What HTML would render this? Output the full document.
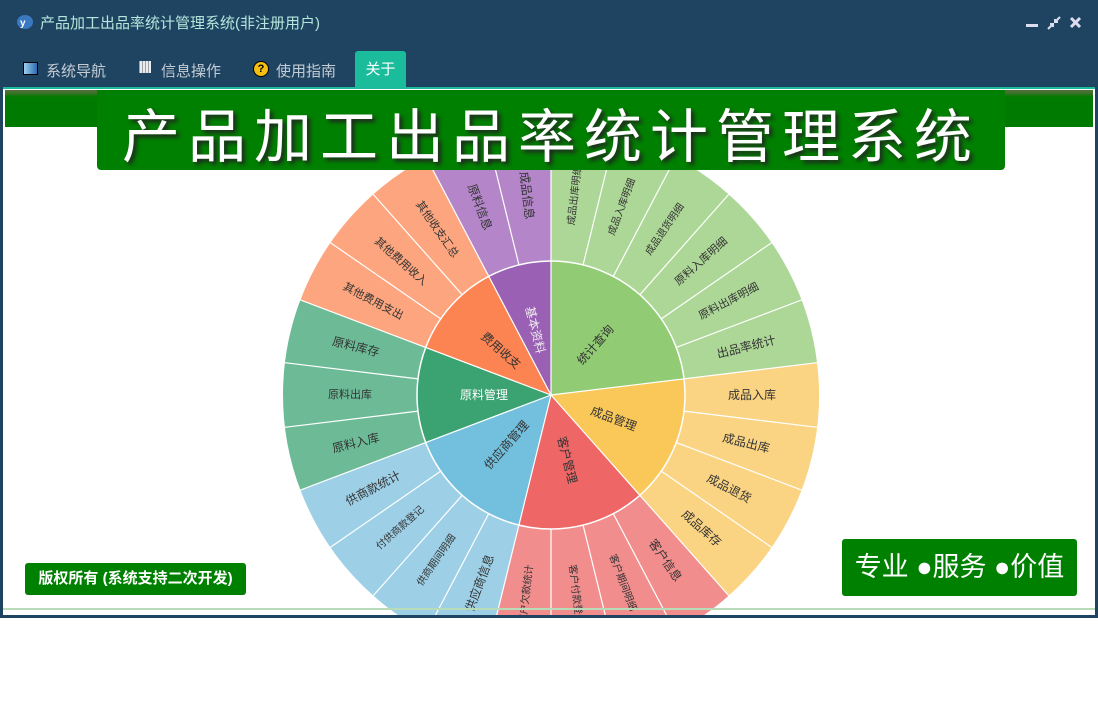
<!DOCTYPE html>
<html><head><meta charset="utf-8"><style>
body{margin:0;width:1098px;height:728px;background:#fff;font-family:"Liberation Sans","Noto Sans CJK SC",sans-serif;position:relative;overflow:hidden}
.win{position:absolute;left:0;top:0;width:1098px;height:618px;background:#1f4462;}
.title{position:absolute;left:40px;top:12px;color:#b6e6dc;font-size:15px}
.tab{position:absolute;top:60px;color:#c4ccd4;font-size:15px}
.content{position:absolute;left:3px;top:89px;width:1092px;height:526px;background:#fff;overflow:hidden}
.green{background:#008000;color:#fff;position:absolute}
</style></head><body>
<div class="win">
 <svg style="position:absolute;left:16px;top:14px" width="18" height="16"><ellipse cx="9" cy="8" rx="8" ry="7" fill="#3a78c0"/><text x="4" y="12" font-size="10" fill="#fff" font-weight="bold">y</text></svg>
 <div class="title">产品加工出品率统计管理系统(非注册用户)</div>
 <svg style="position:absolute;left:1024px;top:15px" width="62" height="16">
  <rect x="2" y="9" width="12" height="3" fill="#dde"/>
  <path d="M24 14 L29 9 M26 9 L29 9 L29 12 M36 2 L31 7 M31 4 L31 7 L34 7" stroke="#dde" stroke-width="2" fill="none"/>
  <path d="M47 3 L56 12 M56 3 L47 12" stroke="#dde" stroke-width="3"/>
 </svg>
 <div style="position:absolute;left:23px;top:62px;width:13px;height:11px;border:1px solid #000;background:linear-gradient(90deg,#9cd0f0,#2a6ab0)"></div>
 <div class="tab" style="left:46px">系统导航</div>
 <div style="position:absolute;left:139px;top:61px;width:12px;height:12px;background:repeating-linear-gradient(90deg,#aaa 0 1px,#fff 1px 3px),#fff;opacity:.9"></div>
 <div class="tab" style="left:161px">信息操作</div>
 <div style="position:absolute;left:253px;top:61px;width:14px;height:14px;border-radius:50%;background:#f5c010;border:1px solid #000;font-size:11px;line-height:14px;text-align:center;font-weight:bold">?</div>
 <div class="tab" style="left:276px">使用指南</div>
 <div style="position:absolute;left:355px;top:51px;width:51px;height:37px;background:#1abc9c;border-radius:3px 3px 0 0;color:#fff;font-size:15px;text-align:center;line-height:38px">关于</div>
 <div style="position:absolute;left:3px;top:87px;width:1092px;height:2px;background:#1abc9c"></div>
 <div class="content">
  <svg width="1092" height="526" style="position:absolute;left:0;top:0">
   <g transform="translate(548,306)" fill="none">
    <g stroke-width="134">
     <circle r="201" stroke="#acd796" stroke-dasharray="291.4 2000" transform="rotate(-90)"/>
     <circle r="201" stroke="#fbd483" stroke-dasharray="194.3 2000" transform="rotate(-6.92)"/>
     <circle r="201" stroke="#f28d8d" stroke-dasharray="194.3 2000" transform="rotate(48.46)"/>
     <circle r="201" stroke="#9dd0e6" stroke-dasharray="194.3 2000" transform="rotate(103.85)"/>
     <circle r="201" stroke="#6cbb96" stroke-dasharray="145.7 2000" transform="rotate(159.23)"/>
     <circle r="201" stroke="#fda57e" stroke-dasharray="145.7 2000" transform="rotate(200.77)"/>
     <circle r="201" stroke="#b486c9" stroke-dasharray="97.2 2000" transform="rotate(242.31)"/>
    </g>
    <g stroke-width="134">
     <circle r="67" stroke="#91cc75" stroke-dasharray="97.1 2000" transform="rotate(-90)"/>
     <circle r="67" stroke="#fac858" stroke-dasharray="64.8 2000" transform="rotate(-6.92)"/>
     <circle r="67" stroke="#ee6666" stroke-dasharray="64.8 2000" transform="rotate(48.46)"/>
     <circle r="67" stroke="#73c0de" stroke-dasharray="64.8 2000" transform="rotate(103.85)"/>
     <circle r="67" stroke="#3ba272" stroke-dasharray="48.6 2000" transform="rotate(159.23)"/>
     <circle r="67" stroke="#fc8452" stroke-dasharray="48.6 2000" transform="rotate(200.77)"/>
     <circle r="67" stroke="#9a60b4" stroke-dasharray="32.4 2000" transform="rotate(242.31)"/>
    </g>
    <circle r="134" stroke="#fff" stroke-width="1.5"/>
    <g stroke="#fff" stroke-width="1.2">
     <line y2="-268" transform="rotate(0)"/><line y2="-268" transform="rotate(83.08)"/><line y2="-268" transform="rotate(138.46)"/><line y2="-268" transform="rotate(193.85)"/><line y2="-268" transform="rotate(249.23)"/><line y2="-268" transform="rotate(290.77)"/><line y2="-268" transform="rotate(332.31)"/>
     <line y1="-134" y2="-268" transform="rotate(13.85)"/><line y1="-134" y2="-268" transform="rotate(27.69)"/><line y1="-134" y2="-268" transform="rotate(41.54)"/><line y1="-134" y2="-268" transform="rotate(55.38)"/><line y1="-134" y2="-268" transform="rotate(69.23)"/>
     <line y1="-134" y2="-268" transform="rotate(96.92)"/><line y1="-134" y2="-268" transform="rotate(110.77)"/><line y1="-134" y2="-268" transform="rotate(124.62)"/>
     <line y1="-134" y2="-268" transform="rotate(152.31)"/><line y1="-134" y2="-268" transform="rotate(166.15)"/><line y1="-134" y2="-268" transform="rotate(180)"/>
     <line y1="-134" y2="-268" transform="rotate(207.69)"/><line y1="-134" y2="-268" transform="rotate(221.54)"/><line y1="-134" y2="-268" transform="rotate(235.38)"/>
     <line y1="-134" y2="-268" transform="rotate(263.08)"/><line y1="-134" y2="-268" transform="rotate(276.92)"/>
     <line y1="-134" y2="-268" transform="rotate(304.62)"/><line y1="-134" y2="-268" transform="rotate(318.46)"/>
     <line y1="-134" y2="-268" transform="rotate(346.15)"/>
    </g>
    <g fill="#333" stroke="none" font-size="12" text-anchor="middle" dominant-baseline="central">
     <text x="201" font-size="10" transform="rotate(-83.08)">成品出库明细</text>
     <text x="201" font-size="10" transform="rotate(-69.23)">成品入库明细</text>
     <text x="201" font-size="10" transform="rotate(-55.38)">成品退货明细</text>
     <text x="201" font-size="11" transform="rotate(-41.54)">原料入库明细</text>
     <text x="201" font-size="11" transform="rotate(-27.69)">原料出库明细</text>
     <text x="201" transform="rotate(-13.85)">出品率统计</text>
     <text x="201" transform="rotate(0)">成品入库</text>
     <text x="201" transform="rotate(13.85)">成品出库</text>
     <text x="201" transform="rotate(27.69)">成品退货</text>
     <text x="201" transform="rotate(41.54)">成品库存</text>
     <text x="201" transform="rotate(55.38)">客户信息</text>
     <text x="201" font-size="10" transform="rotate(69.23)">客户期间明细</text>
     <text x="201" font-size="10" transform="rotate(83.08)">客户付款登记</text>
     <text x="-201" font-size="10" transform="rotate(276.92)">客户欠款统计</text>
     <text x="-201" transform="rotate(290.77)">供应商信息</text>
     <text x="-201" font-size="10" transform="rotate(304.62)">供商期间明细</text>
     <text x="-201" font-size="10" transform="rotate(318.46)">付供商款登记</text>
     <text x="-201" transform="rotate(332.31)">供商款统计</text>
     <text x="-201" transform="rotate(346.15)">原料入库</text>
     <text x="-201" font-size="11" transform="rotate(0)">原料出库</text>
     <text x="-201" transform="rotate(13.85)">原料库存</text>
     <text x="-201" font-size="11" transform="rotate(27.69)">其他费用支出</text>
     <text x="-201" font-size="11" transform="rotate(41.54)">其他费用收入</text>
     <text x="-201" font-size="11" transform="rotate(55.38)">其他收支汇总</text>
     <text x="-201" transform="rotate(69.23)">原料信息</text>
     <text x="-201" transform="rotate(83.08)">成品信息</text>
     <text x="67" transform="rotate(-48.46)">统计查询</text>
     <text x="67" transform="rotate(20.77)">成品管理</text>
     <text x="67" transform="rotate(76.15)">客户管理</text>
     <text x="-67" transform="rotate(311.54)">供应商管理</text>
     <text x="-67" fill="#fff" transform="rotate(0)">原料管理</text>
     <text x="-67" transform="rotate(41.54)">费用收支</text>
     <text x="-67" fill="#eee" transform="rotate(76.15)">基本资料</text>
    </g>
   </g>
  </svg>
  <div style="position:absolute;left:0;top:519px;width:1092px;height:2px;background:#b8dcb8"></div>
  <div class="green" style="left:2px;top:1px;width:1088px;height:37px;background:linear-gradient(#5a6e40 0,#2f7420 4px,#007a00 7px)"></div>
  <div class="green" style="left:94px;top:1px;width:908px;height:80px;border-radius:0 0 4px 4px;font-size:58px;line-height:96px;text-align:center;letter-spacing:8px;text-shadow:3px 3px 4px #222;overflow:hidden">产品加工出品率统计管理系统</div>
  <div class="green" style="left:22px;top:474px;width:221px;height:32px;border-radius:3px;font-size:15px;font-weight:bold;line-height:32px;text-align:center">版权所有 (系统支持二次开发)</div>
  <div class="green" style="left:839px;top:450px;width:235px;height:57px;border-radius:3px;font-size:27px;line-height:57px;text-align:center">专业 ●服务 ●价值</div>
 </div>
</div>
</body></html>
